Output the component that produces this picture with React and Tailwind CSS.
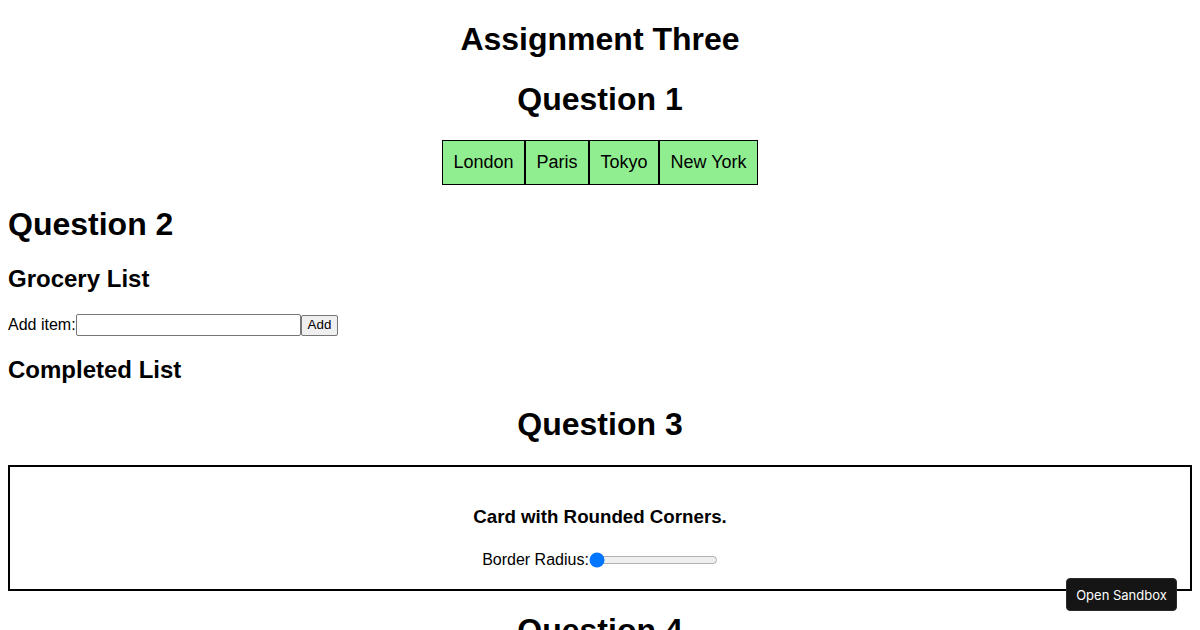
import React, { useState } from 'react';

const cities = ['London', 'Paris', 'Tokyo', 'New York'];

const App = () => {
  const [item, setItem] = useState('');
  const [radius, setRadius] = useState(0);

  return (
    <div className="min-h-screen bg-white text-black px-2 font-['Liberation_Sans',Arial,sans-serif] text-[16px] leading-[normal]">
      <h1 className="text-[32px] leading-[1.18] font-bold text-center my-[21.44px]">Assignment Three</h1>

      {/* Question 1 */}
      <h1 className="text-[32px] leading-[1.18] font-bold text-center my-[21.44px]">Question 1</h1>
      <div className="flex justify-center">
        {cities.map((city) => (
          <div key={city} className="border border-black bg-[#90ee90] px-[10.5px] py-[11px] text-[18px]">
            {city}
          </div>
        ))}
      </div>

      {/* Question 2 */}
      <h1 className="text-[32px] leading-[1.18] font-bold my-[21.44px]">Question 2</h1>
      <h2 className="text-[24px] leading-[1.2] font-bold my-[19.92px]">Grocery List</h2>
      <div className="flex items-center">
        <label htmlFor="item">Add item:</label>
        <input
          id="item"
          type="text"
          value={item}
          onChange={(e) => setItem(e.target.value)}
          className="w-[225px] h-[22px] border border-[#767676] rounded-[2px] px-[2px] text-[13.33px]"
        />
        <button className="h-[21px] px-[6px] border border-[#767676] bg-[#efefef] rounded-[2px] text-[13.33px] leading-none">
          Add
        </button>
      </div>
      <h2 className="text-[24px] leading-[1.2] font-bold my-[19.92px]">Completed List</h2>

      {/* Question 3 */}
      <h1 className="text-[32px] leading-[1.18] font-bold text-center my-[21.44px]">Question 3</h1>
      <div className="border-2 border-black px-5 py-5 text-center">
        <h3 className="text-[18.72px] leading-[1.2] font-bold my-[18.72px]">Card with Rounded Corners.</h3>
        <div className="flex items-center justify-center mt-[22px]">
          <label>Border Radius:</label>
          <input
            type="range"
            min="0"
            max="50"
            value={radius}
            onChange={(e) => setRadius(e.target.value)}
            className="w-[129px] accent-[#0075ff]"
          />
        </div>
      </div>

      {/* Question 4 */}
      <h1 className="text-[32px] leading-[1.18] font-bold text-center my-[21.44px]">Question 4</h1>

      <button className="fixed right-[23px] bottom-[19px] w-[111px] h-[33px] rounded-[4px] bg-[#151515] text-white text-[13px] font-['Inter',sans-serif] border border-[#2a2a2a]">
        Open Sandbox
      </button>
    </div>
  );
};

export default App;
